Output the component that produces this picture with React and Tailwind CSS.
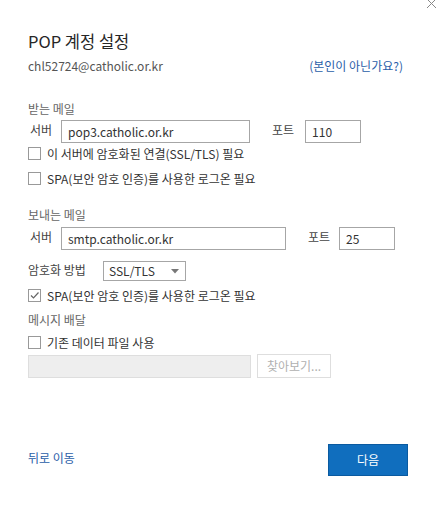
import React from 'react';

const font = { fontFamily: '"Noto Sans CJK KR", "Noto Sans", sans-serif' };

const Check = ({ checked, label }) => (
  <div className="flex items-center h-[25px] text-[12px] text-[#333]">
    <span className="w-[13px] h-[13px] border border-[#999] bg-white flex items-center justify-center">
      {checked && (
        <svg width="11" height="11" viewBox="0 0 11 11">
          <path d="M2 5.5 L4.5 8 L9.5 2.5" fill="none" stroke="#666" strokeWidth="1.2" />
        </svg>
      )}
    </span>
    <span className="ml-[6px]">{label}</span>
  </div>
);

const ServerRow = ({ server, port, serverWidth, gap, portGap }) => (
  <div className="flex items-center h-[23px]">
    <span className="w-[33px] pl-[2px] text-[12px] text-[#444] -mt-[3px]">서버</span>
    <div className={`${serverWidth} h-[23px] border border-[#a6a6a6] flex items-center px-[6px] text-[12px] text-[#333]`}>
      {server}
    </div>
    <span className={`${gap} text-[12px] text-[#444] -mt-[3px]`}>포트</span>
    <div className={`${portGap} w-[56px] h-[23px] border border-[#a6a6a6] flex items-center px-[6px] text-[12px] text-[#333]`}>
      {port}
    </div>
  </div>
);

export default function App() {
  return (
    <div className="relative w-[437px] h-[513px] bg-white overflow-hidden" style={font}>
      {/* close */}
      <svg className="absolute right-[0px] top-[-2px]" width="11" height="11" viewBox="0 0 11 11">
        <path d="M1 1 L10 10 M10 1 L1 10" stroke="#888" strokeWidth="1" />
      </svg>

      <div className="px-[28px] pt-[29px]">
        <h1 className="text-[16.5px] leading-[24px] text-[#262626]">POP 계정 설정</h1>
        <div className="flex justify-between items-center mt-[4px] h-[18px] text-[12px] pr-[6px]">
          <span className="text-[#555]">chl52724@catholic.or.kr</span>
          <a className="text-[#2a5ea8]">(본인이 아닌가요?)</a>
        </div>

        <div className="mt-[25px] text-[12px] text-[#666] h-[18px] leading-[18px]">받는 메일</div>
        <div className="mt-[2px]">
          <ServerRow server="pop3.catholic.or.kr" port="110" serverWidth="w-[189px]" gap="ml-[22px]" portGap="ml-[11px]" />
        </div>
        <div className="-mt-[2px]">
          <Check label="이 서버에 암호화된 연결(SSL/TLS) 필요" />
          <Check label="SPA(보안 암호 인증)를 사용한 로그온 필요" />
        </div>

        <div className="mt-[15px] text-[12px] text-[#666] h-[18px] leading-[18px]">보내는 메일</div>
        <div className="mt-[3px]">
          <ServerRow server="smtp.catholic.or.kr" port="25" serverWidth="w-[225px]" gap="ml-[22px]" portGap="ml-[9px]" />
        </div>

        <div className="flex items-center mt-[11px] h-[20px]">
          <span className="w-[75px] text-[12px] text-[#444] -mt-[2px]">암호화 방법</span>
          <div className="w-[83px] h-[20px] border border-[#a6a6a6] flex items-center justify-between pl-[5px] pr-[6px] text-[12px] text-[#333]">
            <span>SSL/TLS</span>
            <svg width="8" height="5" viewBox="0 0 8 5">
              <path d="M0 0 L8 0 L4 4.5 Z" fill="#777" />
            </svg>
          </div>
        </div>
        <div className="mt-[2px]">
          <Check checked label="SPA(보안 암호 인증)를 사용한 로그온 필요" />
        </div>

        <div className="mt-[3px] text-[12px] text-[#666] h-[18px] leading-[18px]">메시지 배달</div>
        <div className="mt-[1px]">
          <Check label="기존 데이터 파일 사용" />
        </div>
        <div className="flex items-center -mt-[1px]">
          <div className="w-[223px] h-[23px] bg-[#eeeeee] border border-[#dedede]" />
          <div className="ml-[6px] w-[74px] h-[24px] border border-[#dedede] flex items-center justify-center text-[12px] text-[#b0b0b0]">
            찾아보기...
          </div>
        </div>

        <div className="flex items-center justify-between mt-[66px] pr-[1px]">
          <a className="text-[12px] text-[#2a5ea8] -mt-[5px]">뒤로 이동</a>
          <button className="w-[80px] h-[32px] bg-[#106ebe] border border-[#0a5aa0] text-white text-[12px]">
            다음
          </button>
        </div>
      </div>
    </div>
  );
}
